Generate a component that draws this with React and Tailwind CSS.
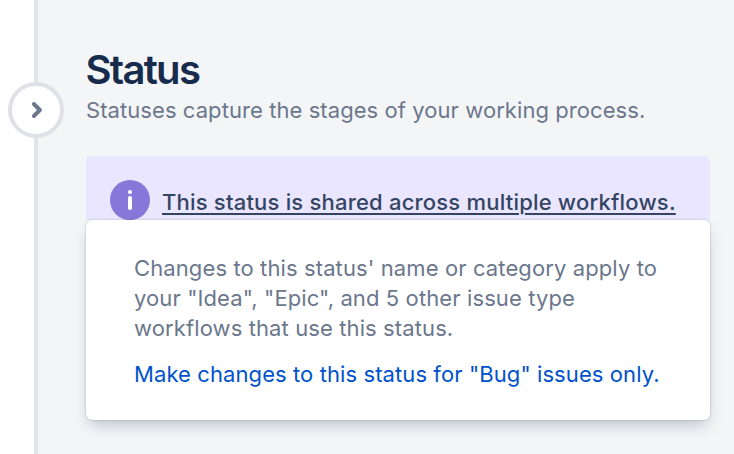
import React from "react";

const App = () => {
  return (
    <div className="flex h-[454px] w-[734px] overflow-hidden bg-[#f4f5f7] font-['Inter',sans-serif]">
      {/* Collapsed panel rail */}
      <div className="relative w-[38px] shrink-0 border-r-4 border-[#e3e4ea] bg-white">
        <button
          type="button"
          aria-label="Expand"
          className="absolute left-2 top-[82px] flex size-14 items-center justify-center rounded-full border-4 border-[#dfe1e6] bg-white"
        >
          <svg width="20" height="20" viewBox="0 0 20 20" fill="none">
            <path d="M7.9 4L13.9 10L7.9 16" stroke="#6b778c" strokeWidth="4" strokeLinecap="round" strokeLinejoin="round" />
          </svg>
        </button>
      </div>

      <main className="ml-12 w-[624px] pt-[46px]">
        <h1 className="-ml-[0.5px] text-[40px] font-semibold leading-[48px] tracking-[-1.7px] text-[#172b4d]">Status</h1>
        <p className="mt-0.5 whitespace-nowrap text-[22px] leading-7 tracking-[0.07px] text-[#6b778c]">
          Statuses capture the stages of your working process.
        </p>

        <div className="mt-8 flex h-16 items-start gap-3 rounded-t-[5px] bg-[#eae6ff] px-6 pt-6">
          <svg className="shrink-0" width="40" height="40" viewBox="0 0 40 40">
            <circle cx="20" cy="20" r="20" fill="#8777d9" />
            <circle cx="20" cy="12" r="2.1" fill="#fff" />
            <rect x="18" y="16" width="4" height="14" rx="1.8" fill="#fff" />
          </svg>
          <a className="mt-2 whitespace-nowrap text-[22px] font-medium leading-7 tracking-[0.2px] text-[#344563] underline decoration-2 underline-offset-[3px]">
            This status is shared across multiple workflows.
          </a>
        </div>

        <div className="relative h-[200px] rounded-[6px] bg-white px-12 pt-[33px] text-[22px] leading-[30px] shadow-[0_8px_16px_-4px_rgba(9,30,66,0.25),0_0_2px_rgba(9,30,66,0.31)]">
          <p className="whitespace-nowrap tracking-[0.11px] text-[#6b778c]">
            Changes to this status' name or category apply to
            <br />
            your "Idea", "Epic", and 5 other issue type
            <br />
            workflows that use this status.
          </p>
          <a className="mt-4 block whitespace-nowrap tracking-[0.09px] text-[#0052cc]">
            Make changes to this status for "Bug" issues only.
          </a>
        </div>
      </main>
    </div>
  );
};

export default App;
